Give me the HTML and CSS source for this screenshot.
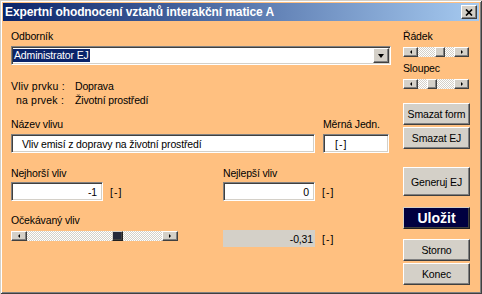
FILE: index.html
```html
<!DOCTYPE html>
<html lang="cs">
<head>
<meta charset="utf-8">
<title>Expertní ohodnocení vztahů interakční matice A</title>
<link rel="stylesheet" href="styles.css">
</head>
<body>
<div class="window">
  <div class="titlebar">
    <span class="title">Expertní ohodnocení vztahů interakční matice A</span>
    <button class="close" type="button" aria-label="Zavřít">
      <svg width="8" height="7" viewBox="0 0 8 7"><path d="M1 0.5 L7 6.5 M7 0.5 L1 6.5" stroke="#000" stroke-width="1.7" fill="none"/></svg>
    </button>
  </div>
  <div class="client">
    <div class="main">
      <div class="label">Odborník</div>
      <div class="combo">
        <div class="combo-value"><span class="sel">Administrator EJ</span></div>
        <div class="combo-btn"><span class="tri-down"></span></div>
      </div>
      <div class="info">
        <span class="info-key">Vliv prvku :</span><span>Doprava</span>
        <span class="info-key">na prvek :</span><span>Životní prostředí</span>
      </div>
      <div class="row-name">
        <div class="field">
          <div class="label">Název vlivu</div>
          <div class="textbox tb-text">Vliv emisí z dopravy na životní prostředí</div>
        </div>
        <div class="field">
          <div class="label">Měrná Jedn.</div>
          <div class="textbox tb-unit"><span class="unit">[-]</span></div>
        </div>
      </div>
      <div class="row-pair row-limits">
        <div class="field">
          <div class="label">Nejhorší vliv</div>
          <div class="val-line"><div class="textbox tb-num">-1</div><span class="unit">[-]</span></div>
        </div>
        <div class="field">
          <div class="label">Nejlepší vliv</div>
          <div class="val-line"><div class="textbox tb-num">0</div><span class="unit">[-]</span></div>
        </div>
      </div>
      <div class="row-pair row-expected">
        <div class="field">
          <div class="label">Očekávaný vliv</div>
          <div class="scroll scroll-wide">
            <div class="sbtn"><span class="arr-l"></span></div>
            <div class="track"><div class="thumb thumb-dark" style="margin-left:85px"></div></div>
            <div class="sbtn"><span class="arr-r"></span></div>
          </div>
        </div>
        <div class="field">
          <div class="val-line val-result"><div class="readonly">-0,31</div><span class="unit">[-]</span></div>
        </div>
      </div>
    </div>
    <div class="side">
      <div class="label">Řádek</div>
      <div class="scroll scroll-small">
        <div class="sbtn"><span class="arr-l"></span></div>
        <div class="track"><div class="thumb" style="margin-left:17px"></div></div>
        <div class="sbtn"><span class="arr-r"></span></div>
      </div>
      <div class="label label-gap">Sloupec</div>
      <div class="scroll scroll-small">
        <div class="sbtn"><span class="arr-l"></span></div>
        <div class="track"><div class="thumb" style="margin-left:9px"></div></div>
        <div class="sbtn"><span class="arr-r"></span></div>
      </div>
      <button class="cmd cmd-clear-form" type="button">Smazat form</button>
      <button class="cmd cmd-clear-ej" type="button">Smazat EJ</button>
      <button class="cmd cmd-generate" type="button">Generuj EJ</button>
      <button class="cmd cmd-save" type="button">Uložit</button>
      <button class="cmd cmd-cancel" type="button">Storno</button>
      <button class="cmd cmd-end" type="button">Konec</button>
    </div>
  </div>
</div>
</body>
</html>
```

FILE: styles.css
```css
* { box-sizing: border-box; }

html, body {
  margin: 0;
  padding: 0;
}

body {
  width: 482px;
  height: 294px;
  overflow: hidden;
  background: #ffc080;
  font-family: "Liberation Sans", Arial, sans-serif;
  font-size: 10.5px;
  letter-spacing: -0.15px;
  color: #000;
}

.window {
  width: 482px;
  height: 294px;
  padding: 3px;
  background: #ffc080;
  box-shadow:
    inset 1px 1px 0 #d4d0c8,
    inset -1px -1px 0 #404040,
    inset 2px 2px 0 #ffffff,
    inset -2px -2px 0 #808080;
  display: flex;
  flex-direction: column;
}

/* title bar */
.titlebar {
  height: 18px;
  flex: none;
  display: flex;
  align-items: center;
  padding: 0 2px 0 2px;
  background: linear-gradient(to right, #0a246a, #a6caf0);
  color: #fff;
}

.title {
  font-size: 12px;
  font-weight: bold;
  letter-spacing: -0.1px;
  white-space: nowrap;
  line-height: 18px;
}

.close {
  margin-left: auto;
  width: 16px;
  height: 14px;
  padding: 0;
  display: flex;
  align-items: center;
  justify-content: center;
  background: #d4d0c8;
  border: 1px solid;
  border-color: #fff #404040 #404040 #fff;
  box-shadow: inset -1px -1px 0 #808080;
}

.close svg { display: block; }

/* client area */
.client {
  display: flex;
  gap: 12px;
  padding: 9px 0 0 8px;
}

.main { width: 380px; flex: none; }
.side { width: 67px; flex: none; display: flex; flex-direction: column; }

.label {
  line-height: 13px;
  height: 13px;
  white-space: nowrap;
}

/* combo box */
.combo {
  margin-top: 3px;
  height: 19px;
  display: flex;
  padding: 1px;
  background: #fff;
  border: 1px solid;
  border-color: #808080 #fff #fff #808080;
  box-shadow: inset 1px 1px 0 #404040, inset -1px -1px 0 #d4d0c8;
}

.combo-value {
  flex: 1;
  display: flex;
  align-items: center;
}

.sel {
  background: #0a246a;
  color: #fff;
  line-height: 13px;
  padding: 0 1px 0 1px;
}

.combo-btn {
  width: 16px;
  height: 15px;
  display: flex;
  align-items: center;
  justify-content: center;
  background: #d4d0c8;
  border: 1px solid;
  border-color: #fff #404040 #404040 #fff;
  box-shadow: inset -1px -1px 0 #808080;
}

.tri-down {
  width: 0;
  height: 0;
  border-left: 3.5px solid transparent;
  border-right: 3.5px solid transparent;
  border-top: 4px solid #000;
}

/* info rows */
.info {
  margin-top: 14px;
  display: grid;
  grid-template-columns: 53px auto;
  column-gap: 11px;
  line-height: 14px;
  white-space: nowrap;
}

.info-key { text-align: right; letter-spacing: 0.2px; }

/* text boxes */
.textbox {
  height: 19px;
  display: flex;
  align-items: center;
  white-space: nowrap;
  overflow: hidden;
  background: #fff;
  border: 1px solid;
  border-color: #808080 #fff #fff #808080;
  box-shadow: inset 1px 1px 0 #404040, inset -1px -1px 0 #d4d0c8;
}

.row-name {
  margin-top: 11px;
  display: grid;
  grid-template-columns: 304px 66px;
  column-gap: 8px;
}

.row-name .textbox { margin-top: 3px; }

.tb-text { padding-left: 10px; }
.tb-unit { padding-left: 11px; }

.tb-num {
  width: 92px;
  justify-content: flex-end;
  padding-right: 5px;
}

.row-pair {
  display: grid;
  grid-template-columns: 212px 168px;
}

.row-limits { margin-top: 14px; }
.row-expected { margin-top: 13px; }

.val-line {
  margin-top: 2px;
  display: flex;
  align-items: center;
  gap: 7px;
}

.val-result { margin-top: 16px; }

.unit {
  white-space: nowrap;
  letter-spacing: 1px;
}

.readonly {
  width: 92px;
  height: 17px;
  display: flex;
  align-items: center;
  justify-content: flex-end;
  padding-right: 2px;
  background: #d4d0c8;
}

/* scroll bars */
.scroll {
  display: flex;
  height: 10px;
}

.scroll-wide { width: 167px; margin-top: 4px; }
.scroll-small { width: 66px; margin-top: 4px; }

.sbtn {
  width: 15px;
  height: 10px;
  flex: none;
  display: flex;
  align-items: center;
  justify-content: center;
  background: #d4d0c8;
  border: 1px solid;
  border-color: #fff #404040 #404040 #fff;
  box-shadow: inset -1px -1px 0 #808080;
}

.scroll-wide .sbtn { width: 16px; }

.track {
  flex: 1;
  display: flex;
  background: repeating-conic-gradient(#d4d0c8 0 25%, #ffffff 0 50%) 0 0 / 2px 2px;
}

.thumb {
  width: 10px;
  height: 10px;
  flex: none;
  background: #d4d0c8;
  border: 1px solid;
  border-color: #fff #404040 #404040 #fff;
  box-shadow: inset -1px -1px 0 #808080;
}

.thumb-dark {
  width: 11px;
  background: #23283a;
  border-color: #d4d0c8 #202020 #202020 #d4d0c8;
  box-shadow: inset -1px -1px 0 #404040;
}

.arr-l, .arr-r {
  width: 0;
  height: 0;
  border-top: 2px solid transparent;
  border-bottom: 2px solid transparent;
}

.arr-l { border-right: 2px solid #000; }
.arr-r { border-left: 2px solid #000; }

.label-gap { margin-top: 5px; }

/* command buttons */
.cmd {
  width: 67px;
  height: 22px;
  padding: 0;
  display: flex;
  align-items: center;
  justify-content: center;
  font-family: inherit;
  font-size: 10.5px;
  letter-spacing: -0.15px;
  color: #000;
  background: #d4d0c8;
  border: 1px solid;
  border-color: #fff #404040 #404040 #fff;
  box-shadow: inset -1px -1px 0 #808080;
  white-space: nowrap;
}

.cmd-clear-form { margin-top: 14px; }
.cmd-clear-ej { margin-top: 2px; }
.cmd-generate { margin-top: 18px; height: 29px; }
.cmd-save {
  margin-top: 11px;
  background: #000040;
  color: #fff;
  font-weight: bold;
  font-size: 14px;
  letter-spacing: 0;
  border-color: #d4d0c8 #202020 #202020 #d4d0c8;
  box-shadow: inset -1px -1px 0 #404040;
}
.cmd-cancel { margin-top: 10px; }
.cmd-end { margin-top: 2px; }
```
